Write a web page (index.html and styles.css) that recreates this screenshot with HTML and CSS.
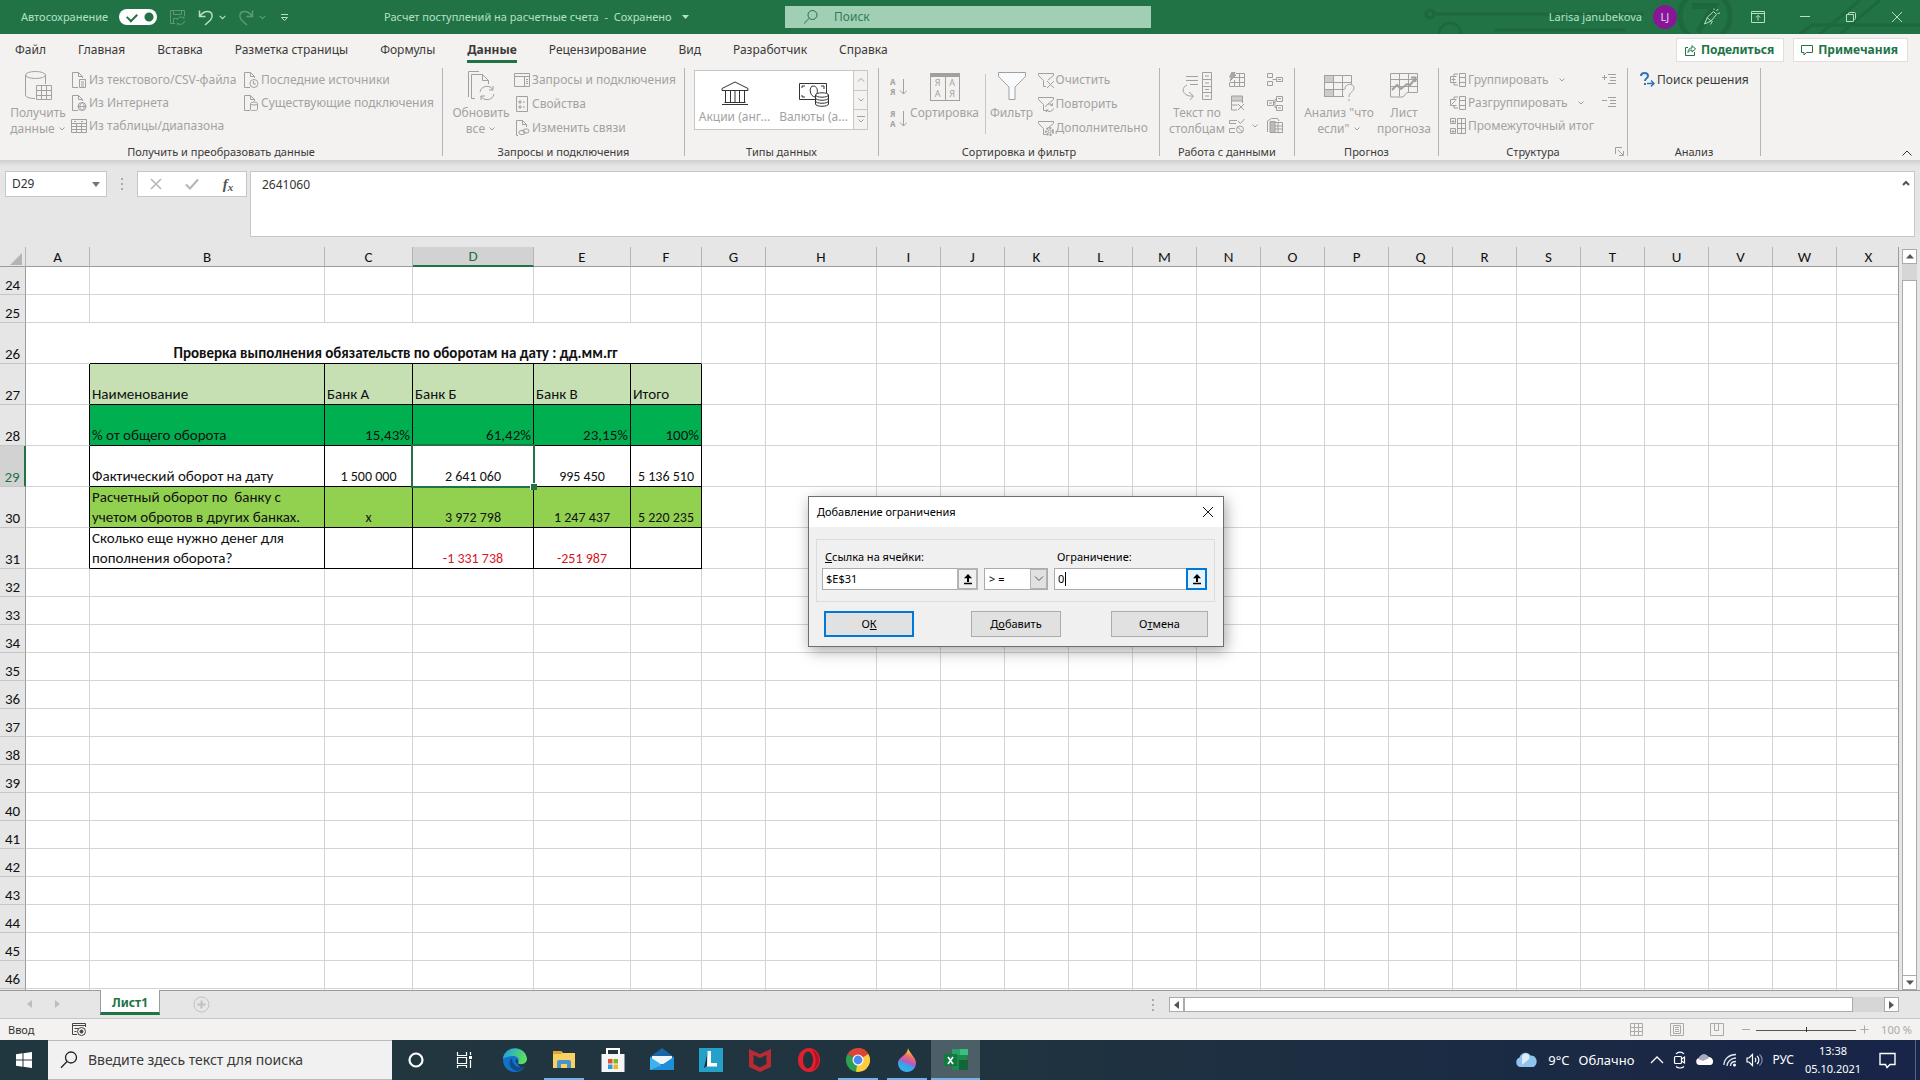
FILE: index.html
```html
<!DOCTYPE html>
<html lang="ru">
<head>
<meta charset="utf-8">
<title>Расчет поступлений на расчетные счета - Excel</title>
<link rel="stylesheet" href="styles.css">
</head>
<body>
<svg class="defs" width="0" height="0" aria-hidden="true">
  <symbol id="chev" viewBox="0 0 8 8"><path d="M1.5 2.5 4 5l2.500-2.500"/></symbol>
  <symbol id="chev-up" viewBox="0 0 8 8"><path d="M1 5.500 4 2.500l3 3"/></symbol>
  <symbol id="page" viewBox="0 0 16 16"><path d="M7 15.500H1.500V.5h6l4 4V6M7.500.5v4h4"/></symbol>
  <symbol id="funnel" viewBox="0 0 16 16"><path d="M.5 1.500h15v2L10 8M.5 1.500v2l5 5v6H8"/></symbol>
  <symbol id="pick" viewBox="0 0 12 12"><path d="M2 10.500h8" stroke="#000" stroke-width="1.500"/><path d="M6 1 2 5.200h3V9h2V5.200h3z" fill="#000" stroke="none"/></symbol>
</svg>

<header class="titlebar">
  <svg class="pattern" width="520" height="34" viewBox="0 0 520 34"><g fill="none" stroke="#1b6239" stroke-width="3"><circle cx="30" cy="14" r="4"/><path d="M34 14h210M95 30h130M400 34l12-9h108M420 34 460 0M440 34 480 0"/><circle cx="50" cy="34" r="11"/><circle cx="305" cy="16" r="25" stroke-width="5"/><path d="m292 6h22l-16 26" stroke-width="6"/></g></svg>
  <div class="title-left">
    <label class="autosave" for="autosave">Автосохранение</label>
    <input class="toggle" type="checkbox" id="autosave" checked>
    <button class="tb-btn dim" aria-label="Сохранить"><svg width="17" height="17" viewBox="0 0 17 17"><path d="M6 14.500H1.500v-13h14V7M4.500 1.500v4h8v-4M4.500 14V9.500H8M8 11a4 4 0 0 1 7-1.500V7.500M15.500 12a4 4 0 0 1-7 2V16"/></svg></button>
    <button class="tb-btn lit" aria-label="Отменить"><svg width="16" height="17" viewBox="0 0 16 17"><path d="M1.500 1.500v6h6M1.500 7.500C4 4 7 2.500 9.500 2.500c5 0 6 5 3 8.500L7 16" stroke-width="1.500"/></svg></button>
    <button class="tb-btn lit chev-btn" aria-label="Список отмены"><svg width="9" height="9" viewBox="0 0 8 8"><use href="#chev"/></svg></button>
    <button class="tb-btn dim" aria-label="Вернуть"><svg width="16" height="17" viewBox="0 0 16 17"><path d="M14.500 1.500v6h-6M14.500 7.500C12 4 9 2.500 6.500 2.500c-5 0-6 5-3 8.500L9 16" stroke-width="1.500"/></svg></button>
    <button class="tb-btn dim chev-btn" aria-label="Список возврата"><svg width="9" height="9" viewBox="0 0 8 8"><use href="#chev"/></svg></button>
    <button class="tb-btn lit custom" aria-label="Настройка панели"><svg width="9" height="9" viewBox="0 0 9 9"><path d="M1 1.500h7M1.500 4.500h6l-3 3z"/></svg></button>
  </div>
  <div class="doc-title"><span>Расчет поступлений на расчетные счета&nbsp; - &nbsp;Сохранено</span><svg width="7" height="4" viewBox="0 0 7 4"><path class="solid" d="M0 0h7L3.500 4z"/></svg></div>
  <div class="search">
    <svg width="16" height="16" viewBox="0 0 16 16"><circle cx="9.500" cy="6" r="4.500"/><path d="M6.300 9.300 1 14.500"/></svg>
    <input type="search" placeholder="Поиск" aria-label="Поиск">
  </div>
  <div class="title-right">
    <span class="user">Larisa janubekova</span>
    <span class="avatar">LJ</span>
    <button class="tb-btn pen" aria-label="Возможности"><svg width="18" height="18" viewBox="0 0 18 18"><path d="m1.500 16 3-7 6-5.500 3 3-5.500 6.500-6.500 3zM4 9.500l4 3.500M9.500 13l-2 3.500M11 2V.5M13.500 3 15 1M14.500 5.500l2.500-.5"/></svg></button>
    <button class="tb-btn" aria-label="Параметры ленты"><svg width="14" height="12" viewBox="0 0 14 12"><path d="M.5.5h13v11H.5zM.5 2.500h13M7 9.500V4.500M4.800 6.500 7 4.300l2.200 2.200"/></svg></button>
    <button class="tb-btn" aria-label="Свернуть"><svg width="12" height="12" viewBox="0 0 12 12"><path d="M1 5.500h10"/></svg></button>
    <button class="tb-btn" aria-label="Развернуть"><svg width="12" height="12" viewBox="0 0 12 12"><path d="M1.500 3.500h7v7h-7zM3.500 3.500V2a1 1 0 0 1 1-.5h5a1 1 0 0 1 1 1v5a1 1 0 0 1-1 1h-1"/></svg></button>
    <button class="tb-btn" aria-label="Закрыть"><svg width="12" height="12" viewBox="0 0 12 12"><path d="m1 1 10 10M11 1 1 11"/></svg></button>
  </div>
</header>

<nav class="tabs">
  <a href="#">Файл</a><a href="#">Главная</a><a href="#">Вставка</a><a href="#">Разметка страницы</a><a href="#">Формулы</a><a href="#" class="active">Данные</a><a href="#">Рецензирование</a><a href="#">Вид</a><a href="#">Разработчик</a><a href="#">Справка</a>
  <div class="tab-actions">
    <button><svg width="12" height="12" viewBox="0 0 12 12"><path d="M4 3.500H1.500v8h9V8M4 8.500c0-3 1.500-4.500 4-4.500V1.500L11.500 5 8 8V6C6 6 5 7 4 8.500z"/></svg>Поделиться</button>
    <button><svg width="12" height="12" viewBox="0 0 12 12"><path d="M.5 1.500h11v7h-6L3 11V8.500H.5z"/></svg>Примечания</button>
  </div>
</nav>

<section class="ribbon">
  <div class="group g-get">
    <div class="tools">
      <button class="big"><svg width="28" height="32" viewBox="0 0 28 32"><path d="M11 28.500C5 28.500 1.500 27 1.500 25V5M21.500 5v9"/><ellipse cx="11.500" cy="5" rx="10" ry="3.500"/><path d="M12.500 15.500h15v14h-15zM12.500 20.500h15M12.500 25.500h15M17.500 15.500v14M22.500 15.500v14"/></svg><span>Получить<br>данные <svg class="c" width="8" height="8"><use href="#chev"/></svg></span></button>
      <div class="col c1">
        <button class="small"><svg width="16" height="16" viewBox="0 0 16 16"><use href="#page"/><path d="M8.500 7.500h6v8h-6zM10 10h3M10 12h3M10 14h3"/></svg>Из текстового/CSV-файла</button>
        <button class="small"><svg width="16" height="16" viewBox="0 0 16 16"><use href="#page"/><circle cx="11" cy="11.500" r="4"/><path d="M7 11.500h8M11 7.500c-3 3-3 5 0 8c3-3 3-5 0-8"/></svg>Из Интернета</button>
        <button class="small"><svg width="16" height="16" viewBox="0 0 16 16"><path d="M.5 1.500h15v13H.5zM.5 5.500h15M.5 8.500h15M.5 11.500h15M5.500 5.500v9M10.500 5.500v9M3 3.500h2M10 3.500h2"/></svg>Из таблицы/диапазона</button>
      </div>
      <div class="col">
        <button class="small"><svg width="16" height="16" viewBox="0 0 16 16"><use href="#page"/><circle cx="11" cy="11.500" r="4"/><path d="M10.500 9v3H13"/></svg>Последние источники</button>
        <button class="small"><svg width="16" height="16" viewBox="0 0 16 16"><use href="#page"/><path d="M7.500 8.500v6c0 1.500 7 1.500 7 0v-6"/><ellipse cx="11" cy="8.500" rx="3.500" ry="1.500"/></svg>Существующие подключения</button>
      </div>
    </div>
    <h2>Получить и преобразовать данные</h2>
  </div>

  <div class="group g-query">
    <div class="tools">
      <button class="big"><svg width="28" height="32" viewBox="0 0 28 32"><path d="M1.500 27V1.500H12M8 28.500H4.500v-24h11l6 6V14M15.500 4.500v6h6"/><path d="M13 22a7 7 0 0 1 13-2v-4M26 20h-4M27 24a7 7 0 0 1-13 2v4M14 26h4"/></svg><span>Обновить<br>все <svg class="c" width="8" height="8"><use href="#chev"/></svg></span></button>
      <div class="col tall">
        <button class="small"><svg width="16" height="16" viewBox="0 0 16 16"><path d="M.5 1.500h15v13H.5zM.5 4.500h15M10.500 4.500v10M12 7.500h2M12 9.500h2M12 11.500h2"/></svg>Запросы и подключения</button>
        <button class="small"><svg width="16" height="16" viewBox="0 0 16 16"><path d="M2.500.5h11v15h-11zM5 5h2v2H5zM5 10h2v2H5zM9 6h2M9 11h2"/></svg>Свойства</button>
        <button class="small"><svg width="16" height="16" viewBox="0 0 16 16"><path d="M4 15.500H2.500V.5h6l4 4V7M8.500.5v4h4"/><rect x="5" y="10.500" width="6" height="4" rx="2"/><rect x="9" y="9" width="6" height="4" rx="2"/></svg>Изменить связи</button>
      </div>
    </div>
    <h2>Запросы и подключения</h2>
  </div>

  <div class="group g-types">
    <div class="tools">
      <div class="gallery">
        <button><svg class="dark" width="28" height="26" viewBox="0 0 28 26"><path d="M1 7.500 14 1l13 6.500v2H1zM1 23.500h26M3.500 21.500h21M4.500 10v11M9.500 10v11M14 10v11M18.500 10v11M23.500 10v11"/></svg><span>Акции (анг...</span></button>
        <button><svg class="dark" width="30" height="26" viewBox="0 0 30 26"><path d="M16 18.500H.5v-16h27V12M3 7V5h3M3 14v2h3M22 5h3v3"/><path d="M16 16c-6-1-6-11-2-11s5 4 4 8"/><path d="M16.500 14v9c0 3 13 3 13 0v-9M16.500 17c0 3 13 3 13 0M16.500 20c0 3 13 3 13 0"/><ellipse cx="23" cy="14" rx="6.500" ry="2.200"/></svg><span>Валюты (а...</span></button>
        <div class="gallery-nav"><button aria-label="Вверх"><svg width="8" height="8"><use href="#chev-up"/></svg></button><button aria-label="Вниз"><svg width="8" height="8"><use href="#chev"/></svg></button><button aria-label="Еще"><svg width="8" height="9" viewBox="0 0 8 9"><path d="M0 1.500h8M1.500 4.500 4 7l2.500-2.500"/></svg></button></div>
      </div>
    </div>
    <h2>Типы данных</h2>
  </div>

  <div class="group g-sort">
    <div class="tools">
      <div class="col sorts">
        <button class="icon-only"><span class="az">А<br>Я</span><svg width="8" height="18" viewBox="0 0 8 18"><path d="M4.500 1v15M1 12.500 4.500 16 8 12.500"/></svg></button>
        <button class="icon-only"><span class="az">Я<br>А</span><svg width="8" height="18" viewBox="0 0 8 18"><path d="M4.500 1v15M1 12.500 4.500 16 8 12.500"/></svg></button>
      </div>
      <button class="big"><span class="sort-box"><span>Я<br>А</span><span>А<br>Я</span></span><span>Сортировка</span></button>
      <i class="rule"></i>
      <button class="big filter"><svg width="28" height="32" viewBox="0 0 28 32"><path d="M.5 2.500h27v4L17 17v12.500h-6V17L.5 6.500z" fill="#f8fafb"/></svg><span>Фильтр</span></button>
      <div class="col tall">
        <button class="small"><svg width="16" height="16" viewBox="0 0 16 16"><use href="#funnel"/><path d="m9 9 7 7M16 9l-7 7"/></svg>Очистить</button>
        <button class="small"><svg width="16" height="16" viewBox="0 0 16 16"><use href="#funnel"/><path d="M7.500 11a4 4 0 0 1 7-1.500V7M14.500 9.500h-2M15.500 12.500a4 4 0 0 1-7 1.500v2M8.500 14h2"/></svg>Повторить</button>
        <button class="small"><svg width="16" height="16" viewBox="0 0 16 16"><use href="#funnel"/><circle cx="11.500" cy="11.500" r="1.500"/><circle cx="11.500" cy="11.500" r="3.500" stroke-dasharray="2 1.200" stroke-width="2"/></svg>Дополнительно</button>
      </div>
    </div>
    <h2>Сортировка и фильтр</h2>
  </div>

  <div class="group g-data">
    <div class="tools">
      <button class="big"><svg width="32" height="32" viewBox="0 0 32 32"><path d="M5 6.500h12M5 10.500h12M9 14.500h8M6 15c-7 3-4 12 6 11M8 22l4.500 4L9 30M21.500 2.500h9v27h-9zM21.500 9.500h9M21.500 16.500h9M21.500 22.500h9M24 6h4M24 13h4M24 19.500h4M24 26h4"/></svg><span>Текст по<br>столбцам</span></button>
      <div class="col icons">
        <button class="icon-only" aria-label="Мгновенное заполнение"><svg width="16" height="16" viewBox="0 0 16 16"><path d="M7 1.500h8.500v13H.5V11M10.500 1.500v13M5.500 8v6.500M5 5.500h10.500M.5 10.500h15"/><path d="M3 0h3L5 3h2L1 9l1.500-4H.5z" fill="#aaa"/></svg></button>
        <button class="icon-only" aria-label="Удалить дубликаты"><svg width="16" height="16" viewBox="0 0 16 16"><path d="M2.500 1h11v5h-11z" fill="#ccc"/><path d="M13.500 8V1M2.500 6v4h6M2.500 10v5H8M9 9l6 6M15 9l-6 6"/></svg></button>
        <button class="icon-only wide" aria-label="Проверка данных"><svg width="16" height="16" viewBox="0 0 16 16"><path d="M8 2.500H.5v3H7M9 3l2.500 2.500L15.500 1M6 10.500H.5v4H6"/><circle cx="11" cy="11.500" r="3.500"/><path d="m8.500 9 5 5"/></svg><svg width="8" height="8"><use href="#chev"/></svg></button>
      </div>
      <div class="col icons">
        <button class="icon-only" aria-label="Консолидация"><svg width="16" height="16" viewBox="0 0 16 16"><path d="M.5 1.500h5v4h-5zM.5 9.500h5v4h-5zM9.500 5.500h6v4h-6zM5.500 7.500h4M11 7.500h3"/></svg></button>
        <button class="icon-only" aria-label="Отношения"><svg width="16" height="16" viewBox="0 0 16 16"><path d="M.5 5.500h6v5h-6zM9.500 1.500h6v5h-6zM9.500 10.500h6v5h-6zM6.500 7.500h1.500v-3h1.500M8 7.500v5h1.500M2 8h3M11 3.500h3M11 13h3"/></svg></button>
        <button class="icon-only" aria-label="Модель данных"><svg width="16" height="16" viewBox="0 0 16 16"><path d="M.5 14V3l4-2.500h6L12 3M7 4.500h8.500v10H7M7 8h8M7 11h8M11 4.500v10"/><path d="M3 3.500h5v11H3z" fill="#bbb"/></svg></button>
      </div>
    </div>
    <h2>Работа с данными</h2>
  </div>

  <div class="group g-forecast">
    <div class="tools">
      <button class="big"><svg width="32" height="32" viewBox="0 0 32 32"><path d="M1.500 5.500h9v7h-9zM1.500 19.500h9v7h-9z" fill="#ccc"/><path d="M21 26.500H1.500v-21h27V14M1.500 12.500h27M1.500 19.500h20M10.500 5.500v21M19.500 5.500v21M22 19c0-6 9-6 9-1 0 4-5 4-5 9M26 29v2"/></svg><span>Анализ "что<br>если" <svg class="c" width="8" height="8"><use href="#chev"/></svg></span></button>
      <button class="big forecast-sheet"><svg width="28" height="32" viewBox="0 0 28 32"><path d="M.5 3.500h27v19H17l-4 4.500H.5zM.5 9.500h27M.5 16.500h27M9.500 3.500v23M18.500 3.500v19"/><path d="m2 20 5-5 4 4 6-5 3 1 5-6M21 7.500h4.500V12" stroke-width="2"/></svg><span>Лист<br>прогноза</span></button>
    </div>
    <h2>Прогноз</h2>
  </div>

  <div class="group g-outline">
    <div class="tools">
      <div class="col">
        <button class="small"><svg width="16" height="16" viewBox="0 0 16 16"><path d="M6.500 4.500h-6v6h6M3.500 5.500v4M1.500 7.500h4M8 2H4v2M8 13H4v-2M9.500 1.500h6v13h-6zM9.500 5.500h6M9.500 10.500h6"/></svg>Группировать<svg class="far" width="8" height="8"><use href="#chev"/></svg></button>
        <button class="small"><svg width="16" height="16" viewBox="0 0 16 16"><path d="M6.500 4.500h-6v6h6M1.500 9.500l4-4M8 2H4v2M8 13H4v-2M9.500 1.500h6v13h-6zM9.500 5.500h6M9.500 10.500h6"/></svg>Разгруппировать<svg class="far" width="8" height="8"><use href="#chev"/></svg></button>
        <button class="small"><svg width="16" height="16" viewBox="0 0 16 16"><path d="M.5.5h5v5h-5zM.5 10.500h5v5h-5zM3 2v3M1.500 3.500h3M3 12v3M1.500 13.500h3M7.500.5h8v15h-8zM7.500 5.500h8M7.500 10.500h8M11.500.5v15"/></svg>Промежуточный итог</button>
      </div>
      <div class="col end">
        <button class="icon-only" aria-label="Показать детали"><svg width="16" height="16" viewBox="0 0 16 16"><path d="M1 5.500h5M3.500 3v5M7 2.500h8M9 5.500h6M9 8.500h6M7 11.500h8"/></svg></button>
        <button class="icon-only" aria-label="Скрыть детали"><svg width="16" height="16" viewBox="0 0 16 16"><path d="M1 5.500h5M7 2.500h8M9 5.500h6M9 8.500h6M7 11.500h8"/></svg></button>
      </div>
    </div>
    <h2>Структура</h2>
    <button class="launcher" aria-label="Параметры структуры"><svg width="9" height="9" viewBox="0 0 9 9"><path d="M.5 7V.5H7M3 3l5 5M8.500 4v4.500H4"/></svg></button>
  </div>

  <div class="group g-solver">
    <div class="tools">
      <button class="small live"><svg width="15" height="16" viewBox="0 0 15 16"><g stroke="#2e75b6" stroke-width="2"><path d="M1 4c0-4 7-4 7 0 0 2.500-3 2-3 5M5 11v2"/><path d="M7 11.500h7M11 8.500l3 3-3 3" stroke-width="1.500"/></g></svg>Поиск решения</button>
    </div>
    <h2>Анализ</h2>
  </div>
  <button class="collapse" aria-label="Свернуть ленту"><svg width="10" height="6" viewBox="0 0 10 6"><path d="M.5 5.500 5 1l4.500 4.500"/></svg></button>
</section>

<section class="formula">
  <div class="namebox"><input type="text" value="D29" aria-label="Имя"><svg width="8" height="5" viewBox="0 0 8 5"><path d="M0 0h8L4 5z" fill="#777"/></svg></div>
  <i class="dots"></i>
  <div class="fx">
    <button aria-label="Отмена"><svg width="12" height="12" viewBox="0 0 12 12"><path d="m1 1 10 10M11 1 1 11" stroke="#b5b5b5" stroke-width="1.500" fill="none"/></svg></button>
    <button aria-label="Ввод"><svg width="14" height="12" viewBox="0 0 14 12"><path d="m1 6.500 4 4L13 1.500" stroke="#b5b5b5" stroke-width="2" fill="none"/></svg></button>
    <button class="fn" aria-label="Вставить функцию">f<sub>x</sub></button>
  </div>
  <div class="formula-box"><textarea aria-label="Строка формул">2641060</textarea><svg width="8" height="8" viewBox="0 0 8 8"><path d="M1 6 4 3l3 3" stroke="#555" stroke-width="2" fill="none"/></svg></div>
</section>

<main class="grid-area">
  <div class="sheet">
    <table>
      <colgroup><col class="w26"><col class="w64"><col class="w235"><col class="w88"><col class="w121"><col class="w97"><col class="w71"><col class="w64"><col class="w111"><col class="w64" span="16"></colgroup>
      <thead><tr><th class="corner"><svg width="12" height="12" viewBox="0 0 12 12"><path d="M12 0v12H0z" fill="#b4b4b4"/></svg></th><th>A</th><th>B</th><th>C</th><th class="sel">D</th><th>E</th><th>F</th><th>G</th><th>H</th><th>I</th><th>J</th><th>K</th><th>L</th><th>M</th><th>N</th><th>O</th><th>P</th><th>Q</th><th>R</th><th>S</th><th>T</th><th>U</th><th>V</th><th>W</th><th>X</th></tr></thead>
      <tbody>
        <tr><th>24</th></tr>
        <tr><th>25</th></tr>
        <tr class="t head"><th>26</th><td></td><td colspan="5">Проверка выполнения обязательств по оборотам на дату : дд.мм.гг</td></tr>
        <tr class="t light"><th>27</th><td class="edge"></td><td>Наименование</td><td>Банк А</td><td>Банк Б</td><td>Банк В</td><td>Итого</td></tr>
        <tr class="t green pct"><th>28</th><td class="edge"></td><td>% от общего оборота</td><td>15,43%</td><td>61,42%</td><td>23,15%</td><td>100%</td></tr>
        <tr class="t num"><th class="sel">29</th><td class="edge"></td><td>Фактический оборот на дату</td><td>1 500 000</td><td class="active">2 641 060</td><td>995 450</td><td>5 136 510</td></tr>
        <tr class="t lime num"><th>30</th><td class="edge"></td><td>Расчетный оборот по&nbsp; банку с<br>учетом обротов в других банках.</td><td>х</td><td>3 972 798</td><td>1 247 437</td><td>5 220 235</td></tr>
        <tr class="t num"><th>31</th><td class="edge"></td><td>Сколько еще нужно денег для<br>пополнения оборота?</td><td></td><td class="neg">-1 331 738</td><td class="neg">-251 987</td><td></td></tr>
      </tbody>
    </table>
  </div>
  <div class="vscroll">
    <button aria-label="Прокрутить вверх"><svg width="8" height="5" viewBox="0 0 8 5"><path d="M4 0 8 4.500H0z" fill="#555"/></svg></button>
    <i class="thumb"></i>
    <button aria-label="Прокрутить вниз"><svg width="8" height="5" viewBox="0 0 8 5"><path d="M4 5 8 .5H0z" fill="#555"/></svg></button>
  </div>
</main>

<section class="sheetbar">
  <button class="nav" aria-label="Предыдущий лист"><svg width="5" height="8" viewBox="0 0 5 8"><path d="M5 0v8L0 4z" fill="#bdbdbd"/></svg></button>
  <button class="nav" aria-label="Следующий лист"><svg width="5" height="8" viewBox="0 0 5 8"><path d="M0 0v8l5-4z" fill="#bdbdbd"/></svg></button>
  <button class="sheet-tab">Лист1</button>
  <button class="add" aria-label="Новый лист"><svg width="17" height="17" viewBox="0 0 17 17"><circle cx="8.500" cy="8.500" r="7.500" fill="none" stroke="#c0c0c0"/><path d="M4.500 8.500h8M8.500 4.500v8" stroke="#c0c0c0" stroke-width="2"/></svg></button>
  <i class="dots"></i>
  <div class="hscroll">
    <button aria-label="Прокрутить влево"><svg width="5" height="8" viewBox="0 0 5 8"><path d="M5 0v8L0 4z" fill="#555"/></svg></button>
    <i class="thumb"></i>
    <button aria-label="Прокрутить вправо"><svg width="5" height="8" viewBox="0 0 5 8"><path d="M0 0v8l5-4z" fill="#555"/></svg></button>
  </div>
</section>

<footer class="status">
  <span class="mode">Ввод</span>
  <button aria-label="Запись макроса"><svg class="dk" width="15" height="13" viewBox="0 0 15 13"><path d="M5 11.500H.5V.5h13V4M.5 2.500h13M2.500 5.500h4M2.500 8.500h2"/><circle cx="9.500" cy="8.500" r="4"/><circle cx="9.500" cy="8.500" r="1.500" fill="#444"/></svg></button>
  <div class="views">
    <button aria-label="Обычный"><svg width="14" height="13" viewBox="0 0 14 13"><path d="M.5.5h12v12H.5zM.5 4.500h12M.5 8.500h12M4.500.5v12M8.500.5v12"/></svg></button>
    <button aria-label="Разметка страницы"><svg width="14" height="13" viewBox="0 0 14 13"><path d="M.5.5h13v12H.5zM3.500 2.500h7v8h-7zM5 4.500h4M5 6.500h4M5 8.500h4"/></svg></button>
    <button aria-label="Страничный режим"><svg width="14" height="13" viewBox="0 0 14 13"><path d="M.5.5h13v12H.5zM4.500.5v7h4v-7M8.500 7.500v-7"/></svg></button>
  </div>
  <button aria-label="Уменьшить"><svg width="9" height="9" viewBox="0 0 9 9"><path d="M0 4.500h8"/></svg></button>
  <input type="range" min="0" max="100" value="50" aria-label="Масштаб">
  <button aria-label="Увеличить"><svg width="9" height="9" viewBox="0 0 9 9"><path d="M.5 4.500h8M4.500.5v8"/></svg></button>
  <span class="percent">100 %</span>
</footer>

<footer class="taskbar">
  <button class="start" aria-label="Пуск"><svg width="16" height="16" viewBox="0 0 16 16"><path d="M0 2.200 6.500 1.300v6.200H0zM7.500 1.200 16 0v7.500H7.500zM0 8.500h6.500v6.200L0 13.800zM7.500 8.500H16V16l-8.500-1.200z" fill="#fff"/></svg></button>
  <div class="tsearch"><svg width="18" height="18" viewBox="0 0 18 18"><circle cx="11" cy="6.500" r="5.500" fill="none" stroke="#222" stroke-width="1.300"/><path d="M7 10.500 1 16.800" stroke="#222" stroke-width="1.300"/></svg><input type="text" placeholder="Введите здесь текст для поиска" aria-label="Поиск в системе"></div>
  <button class="app sys" aria-label="Кортана"><svg width="18" height="18" viewBox="0 0 18 18"><circle cx="9" cy="9" r="6.500" fill="none" stroke="#fff" stroke-width="2.200"/></svg></button>
  <button class="app sys" aria-label="Представление задач"><svg width="17" height="16" viewBox="0 0 17 16"><path d="M1.500 0v3.500h9V0M1.500 6.500v-1h9v6h-9zM1.500 16v-2.500h9V16M14.500 0v3M14.500 8v8" fill="none" stroke="#fff" stroke-width="1.200"/><path d="M13 4h3v3h-3z" fill="#fff"/></svg></button>
  <button class="app" aria-label="Edge"><svg width="24" height="24" viewBox="0 0 24 24"><defs><linearGradient id="e1" x1="0" x2="1" y1=".2" y2=".4"><stop offset="0" stop-color="#1f9fe0"/><stop offset="1" stop-color="#5fe05a"/></linearGradient></defs><circle cx="12" cy="12" r="12" fill="#1272c8"/><path d="M0 11C1-2 22-4 24 11c.5 5-7 7-9 4 2-3 0-7-5-7-4 0-8 1-10 3z" fill="url(#e1)"/><path d="M9 10c-5 4-2 12 5 13 4 0 7-3 8-5-6 3-13 0-13-8z" fill="#0d4a92"/><path d="M14 15c-2-1-1-3-1-4 2 1 3 5 1 4z" fill="#21343c"/><path d="M14.500 15c3 2.500 8 1.500 9.500-3v6l-2 1c-3 1.500-7-1-7.500-4z" fill="#22373e"/></svg></button>
  <button class="app open" aria-label="Проводник"><svg width="22" height="20" viewBox="0 0 22 20"><path d="M0 1h8l2 2h12v15H0z" fill="#f8d063"/><path d="M0 1h8l1 3H0z" fill="#dfa52e"/><path d="M4 18v-6q0-2 2-2h10q2 0 2 2v6h-4v-4H8v4z" fill="#4c93cc"/></svg></button>
  <button class="app" aria-label="Магазин"><svg width="24" height="24" viewBox="0 0 24 24"><path d="M6 7V1h12v6" fill="none" stroke="#fff" stroke-width="2"/><path d="M.5 6h23v18H.5z" fill="#f5f5f5"/><path d="M7 11h4.500v4.500H7z" fill="#e5532d"/><path d="M12.500 11H17v4.500h-4.500z" fill="#7eb52c"/><path d="M7 16.500h4.500V21H7z" fill="#2a9de0"/><path d="M12.500 16.500H17V21h-4.500z" fill="#f3b51f"/></svg></button>
  <button class="app" aria-label="Почта"><svg width="24" height="24" viewBox="0 0 24 24"><path d="M0 9 12 0l12 9v13H0z" fill="#1766a8"/><path d="M2 8h20v8H2z" fill="#eef6fc"/><path d="m0 9 12 8 12-8v13H0z" fill="#3eb2ee"/><path d="m24 9-12 8-12 5h24z" fill="#1f8edb"/></svg></button>
  <button class="app" aria-label="Lingvo"><svg width="24" height="24" viewBox="0 0 24 24"><path d="M0 0h24v24H0z" fill="#25a0c8"/><path d="m9 3-4 17 3-2z" fill="#0e2f42"/><path d="M8.500 3H12v12h6v3.500H8z" fill="#fff"/></svg></button>
  <button class="app" aria-label="McAfee"><svg width="22" height="24" viewBox="0 0 22 24"><path d="m0 1 11 5 11-5v18l-11 5-11-5zM4.500 7v9l6.500 3.500 6.500-3.500V7L11 10z" fill="#bb2a34" fill-rule="evenodd"/></svg></button>
  <button class="app" aria-label="Opera"><svg width="24" height="24" viewBox="0 0 24 24"><ellipse cx="12" cy="12" rx="11" ry="12" fill="#e11f2f"/><ellipse cx="11" cy="12" rx="5" ry="8.500" fill="#21343e"/><path d="M15 2c8 2 10 16 0 20 6-5 4-16 0-20z" fill="#b3121e"/></svg></button>
  <button class="app open" aria-label="Chrome"><svg width="24" height="24" viewBox="0 0 24 24"><path d="M12 12 1.600 6A12 12 0 0 1 22.400 6z" fill="#dc4437"/><path d="M12 12V0a12 12 0 0 1 10.400 6z" fill="#dc4437"/><path d="M12 12 22.400 6A12 12 0 0 1 12 24z" fill="#fccd3f"/><path d="M12 12v12A12 12 0 0 1 1.600 6z" fill="#2da04f"/><path d="m12 12 5 3-5 9-2-.500z" fill="#fccd3f"/><circle cx="12" cy="12" r="5.500" fill="#fff"/><circle cx="12" cy="12" r="4.400" fill="#4a8af4"/></svg></button>
  <button class="app open" aria-label="Paint 3D"><svg width="20" height="24" viewBox="0 0 20 24"><defs><linearGradient id="d1" x1=".7" x2=".4" y1="0" y2="1"><stop offset=".1" stop-color="#ffd23c"/><stop offset=".35" stop-color="#f06a6a"/><stop offset=".6" stop-color="#b558c4"/><stop offset=".7" stop-color="#3f9fe8"/><stop offset="1" stop-color="#35b4ee"/></linearGradient></defs><path d="M11 0c1 5 8 9 8 15 0 5-4 9-9 9s-9-4-9-9C1 9 11 7 11 0z" fill="url(#d1)"/></svg></button>
  <button class="app open current" aria-label="Excel"><svg width="24" height="22" viewBox="0 0 24 22"><path d="M8 0h15v21H8z" fill="#1d8a4c"/><path d="M15 0h9v6h-9z" fill="#3ac17f"/><path d="M8 0h8v6H8z" fill="#27a465"/><path d="M15 11h9v10h-9z" fill="#14643a"/><path d="M0 5h13v12H0z" fill="#117a40"/><path d="m4 8 5 7M9 8l-5 7" stroke="#fff" stroke-width="1.600"/></svg></button>
  <div class="tray">
    <button class="weather"><svg width="24" height="18" viewBox="0 0 24 18"><path d="M5 16a5 5 0 0 1-.5-9.500C6 1 13 0 15.500 4.500 22 4 24 13 18.500 16z" fill="#8fc3ec"/><path d="M7 5c3-5 9-2 7 3L7 14z" fill="#dcecfa"/></svg><span>9°C</span><span>Облачно</span></button>
    <button aria-label="Скрытые значки"><svg width="14" height="8" viewBox="0 0 14 8"><path d="m1 7 6-6 6 6" fill="none" stroke="#fff" stroke-width="1.300"/></svg></button>
    <button aria-label="Камера"><svg width="14" height="18" viewBox="0 0 14 18"><g fill="none" stroke="#fff" stroke-width="1.200"><rect x="1.500" y="5.500" width="7" height="7" rx="1"/><path d="m8.500 8 3-2v6l-3-2M3 3c2-2.500 6-2.500 8 0M3 15.500c2 2 6 2 8 0"/></g></svg></button>
    <button aria-label="Облако"><svg width="18" height="12" viewBox="0 0 18 12"><path d="M4 11a3.500 3.500 0 0 1-.5-7C5-.5 10-.5 12 3c5-.5 7 6 3 8z" fill="#fff"/><path d="M2 5C5-1 11-1 13 4L7 7z" fill="#aab"/></svg></button>
    <button aria-label="Сеть"><svg width="14" height="14" viewBox="0 0 14 14"><g fill="none" stroke="#dfe4ee" stroke-width="1.300"><path d="M1 12C1 6 6 1.500 13 1.500M4 13c0-4 4-8 9-8M7.500 13c0-2.500 2-4.500 5.500-4.500"/></g><circle cx="11.500" cy="12" r="1.500" fill="#fff"/></svg></button>
    <button aria-label="Громкость"><svg width="17" height="14" viewBox="0 0 17 14"><g fill="none" stroke="#fff" stroke-width="1.200"><path d="M1 5v4h2l3.500 3.500v-11L3 5zM9 5c1 1 1 3 0 4M11 3c2.500 2 2.500 6 0 8"/><path d="M13.500 1.500c3.500 3 3.500 8 0 11" stroke="#7e87a5"/></g></svg></button>
    <button class="lang">РУС</button>
    <button class="clock"><span>13:38</span><span>05.10.2021</span></button>
    <button class="note" aria-label="Уведомления"><svg width="17" height="17" viewBox="0 0 17 17"><path d="M1 1.500h15v11h-5L8 15.500 6.500 12.500H1z" fill="none" stroke="#fff" stroke-width="1.400"/></svg></button>
  </div>
</footer>

<div class="dialog" role="dialog" aria-labelledby="dlg-title">
  <div class="dlg-head"><span id="dlg-title">Добавление ограничения</span><button aria-label="Закрыть"><svg width="12" height="12" viewBox="0 0 12 12"><path d="m1 1 10 10M11 1 1 11" stroke="#111" fill="none"/></svg></button></div>
  <div class="dlg-body">
    <div class="frame">
      <div class="field f1"><label for="ref"><u>С</u>сылка на ячейки:</label><div class="pickbox"><input id="ref" type="text" value="$E$31"><button aria-label="Выбрать ячейки"><svg width="12" height="12"><use href="#pick"/></svg></button></div></div>
      <div class="field f2"><div class="selbox"><select aria-label="Оператор"><option>&gt; =</option></select><i><svg width="10" height="6" viewBox="0 0 10 6"><path d="m1 .5 4 4 4-4" stroke="#555" fill="none"/></svg></i></div></div>
      <div class="field f3"><label for="lim">Ограничение:</label><div class="pickbox hot"><input id="lim" type="text" value="0"><i class="caret"></i><button aria-label="Выбрать ограничение"><svg width="12" height="12"><use href="#pick"/></svg></button></div></div>
    </div>
    <div class="dlg-buttons"><button class="ok">О<u>К</u></button><button>Д<u>о</u>бавить</button><button class="cancel">О<u>т</u>мена</button></div>
  </div>
</div>
<script src="grid.js"></script>
</body>
</html>
```
FILE: grid.js
```js
const COLUMNS = 24;
const LAST_ROW = 46;
const body = document.querySelector('.sheet tbody');

// One unlabelled row follows the last numbered one and is clipped by the window edge.
for (let n = 32; n <= LAST_ROW + 1; n++) {
  const row = body.insertRow();
  const head = document.createElement('th');
  head.textContent = n > LAST_ROW ? '' : n;
  row.append(head);
}

for (const row of body.rows) {
  let used = -1;
  for (const cell of row.cells) used += cell.colSpan;
  for (; used < COLUMNS; used++) {
    row.insertCell().className = 'blank';
  }
}
```
FILE: styles.css
```css
* { box-sizing: border-box; }
body {
  margin: 0;
  height: 100vh;
  display: flex;
  flex-direction: column;
  overflow: hidden;
  background: #e6e6e6;
  color: #333;
  font: 12px/16px "Noto Sans", "Open Sans", sans-serif;
}
button, input, textarea, select { font: inherit; color: inherit; }
button { border: 0; padding: 0; background: none; display: flex; align-items: center; justify-content: center; }
svg { display: block; flex: none; }
.defs { position: absolute; }
i { font-style: normal; }

/* title bar */
.titlebar {
  position: relative;
  height: 34px;
  flex: none;
  display: grid;
  grid-template-columns: 384px 401px 366px 1fr;
  align-items: center;
  background: #217346;
  color: #b5e0c5;
}
.titlebar svg { fill: none; stroke: currentColor; }
.titlebar .solid { fill: currentColor; stroke: none; }
.pattern { position: absolute; right: 0; top: 0; opacity: .6; }
.title-left { display: flex; align-items: center; padding-left: 21px; }
.autosave { width: 98px; font-size: 11px; white-space: nowrap; }
.toggle {
  appearance: none;
  margin: 0 12px 0 0;
  width: 38px;
  height: 16px;
  border-radius: 8px;
  background: radial-gradient(circle at 30px 8px, #217346 4px, transparent 5px), #fff;
}
.toggle::after {
  content: "";
  display: block;
  margin: 4px 0 0 8px;
  width: 8px;
  height: 5px;
  border: solid #217346;
  border-width: 0 0 2px 2px;
  transform: rotate(-45deg);
}
.tb-btn { height: 20px; }
.dim { color: #5c9a76; }
.lit { color: #b5e0c5; margin-left: 12px; }
.lit + .chev-btn, .dim + .chev-btn { margin-left: 4px; }
.chev-btn + .dim { margin-left: 11px; }
.chev-btn + .custom { margin-left: 13px; }
.doc-title { display: flex; align-items: center; gap: 10px; white-space: nowrap; font-size: 11px; }
.search { display: flex; align-items: center; height: 22px; background: #a0cfb4; padding-left: 18px; color: #217346; gap: 15px; }
.search input { flex: 1; border: 0; background: none; padding: 0; outline: 0; }
.search input::placeholder { color: #2f7d54; opacity: 1; }
.title-right { position: relative; display: flex; align-items: center; justify-content: flex-end; padding-right: 17px; }
.user { font-size: 11px; }
.avatar { width: 24px; height: 24px; border-radius: 50%; background: #881798; color: #e9cdee; font-size: 11px; line-height: 24px; text-align: center; margin: 0 26px 0 11px; }
.title-right .tb-btn { margin-left: 34px; }
.title-right .pen { margin-left: 0; }
.title-right .pen + .tb-btn { margin-left: 30px; }

/* ribbon tabs */
.tabs { flex: none; height: 34px; display: flex; align-items: center; gap: 32px; padding: 0 12px 2px 15px; background: #f3f2f1; white-space: nowrap; }
.tabs a { color: #3b3a39; text-decoration: none; line-height: 20px; border-bottom: 3px solid transparent; margin-top: 2px; }
.tabs a.active { font-weight: bold; border-color: #217346; }
.tab-actions { margin-left: auto; display: flex; gap: 9px; }
.tab-actions button { height: 24px; padding: 0 9px 0 7px; gap: 5px; background: #fff; border: 1px solid #e1dfdd; color: #217346; font-weight: bold; }
.tab-actions svg { fill: none; stroke: currentColor; }

/* ribbon */
.ribbon { position: relative; flex: none; height: 92px; display: flex; background: #f3f2f1; color: #a3a2a1; }
.ribbon svg { fill: none; stroke: #a0a0a0; }
.group { position: relative; flex: none; display: flex; flex-direction: column; border-right: 1px solid #b4b4b4; height: 88px; white-space: nowrap; }
.tools { flex: 1; display: flex; align-items: flex-start; }
.group h2 { margin: 0; font-size: 11px; font-weight: normal; line-height: 20px; height: 14px; color: #3b3a39; text-align: center; }
.g-get { width: 443px; }
.g-query { width: 242px; }
.g-types { width: 194px; }
.g-sort { width: 281px; }
.g-data { width: 135px; }
.g-forecast { width: 144px; }
.g-outline { width: 189px; }
.g-solver { width: 133px; }
.big { flex-direction: column; justify-content: flex-start; width: 60px; margin: 2px 0 0 8px; line-height: 16px; text-align: center; }
.big > svg { margin-bottom: 3px; }
.big .c { display: inline-block; }
.col { display: flex; flex-direction: column; margin-left: 3px; }
.c1 { width: 169px; }
.small { height: 23px; justify-content: flex-start; gap: 2px; }
.tall .small { height: 24px; }
.live { color: #3b3a39; margin-left: 12px; }
.far { margin-left: 7px; }
.icon-only { height: 23px; justify-content: flex-start; }
.gallery { display: flex; margin: 2px 0 0 9px; width: 174px; height: 60px; border: 1px solid #c8c6c4; background: #fff; }
.gallery > button { width: 79px; flex-direction: column; justify-content: flex-end; gap: 2px; padding-bottom: 4px; }
.ribbon svg.dark { stroke: #333; }
.gallery-nav { flex: 1; display: flex; flex-direction: column; border-left: 1px solid #c8c6c4; background: #f3f2f1; }
.gallery-nav button { flex: 1; }
.gallery-nav button + button { border-top: 1px solid #c8c6c4; }
.sorts { margin: 9px 0 0 11px; gap: 12px; }
.sorts .icon-only { height: 20px; gap: 3px; }
.az { font-size: 8px; line-height: 10px; font-weight: bold; }
.g-sort .big { width: 70px; margin-left: 3px; }
.sort-box { display: grid; grid-template-columns: 14px 14px; margin: 3px 0 4px; height: 28px; border: 1px solid #a0a0a0; border-top-width: 4px; font-size: 9px; line-height: 11px; }
.sort-box span + span { border-left: 1px solid #a0a0a0; }
.rule { width: 1px; height: 60px; margin: 6px 0 0 5px; background: #c8c6c4; }
.g-sort .filter { width: 52px; margin-left: 0; }
.g-sort .tall { margin-left: 0; }
.icons { margin-left: 2px; }
.icons .wide { gap: 6px; }
.icons + .icons { margin-left: 8px; }
.g-data .big { margin-left: 7px; }
.g-forecast .big { width: 72px; }
.g-forecast .forecast-sheet { width: 54px; margin-left: 2px; }
.g-outline .col { margin-left: 11px; }
.g-outline .end { margin: 0 10px 0 auto; }
.launcher { position: absolute; right: 3px; bottom: 0; }
.collapse { margin: 82px 8px 0 auto; align-self: flex-start; }
.ribbon .collapse svg { stroke: #333; }

/* formula bar */
.formula { flex: none; height: 87px; display: flex; align-items: flex-start; padding: 11px 5px 10px; background: linear-gradient(#cfcfcf, #e6e6e6 6px); }
.namebox, .fx, .formula-box { display: flex; background: #fff; border: 1px solid #c6c6c6; }
.namebox { width: 102px; height: 26px; align-items: center; padding: 0 6px 0 0; }
.namebox input { flex: 1; min-width: 0; border: 0; padding: 0 6px; outline: 0; }
.dots { width: 2px; height: 12px; margin: 7px 14px 0; background: repeating-linear-gradient(#aaa 0 2px, transparent 2px 5px); }
.fx { width: 110px; height: 26px; justify-content: space-around; }
.fx button { width: 36px; }
.fn { font: italic bold 15px/20px "Liberation Serif", serif; color: #555; }
.fn sub { font-size: 11px; line-height: 12px; align-self: flex-end; margin-bottom: 3px; }
.formula-box { flex: 1; height: 66px; margin-left: 3px; padding-right: 4px; }
.formula-box textarea { flex: 1; border: 0; resize: none; outline: 0; padding: 5px 11px; background: none; }
.formula-box svg { margin-top: 7px; }

/* worksheet */
.grid-area { flex: 1; min-height: 0; display: flex; border-bottom: 1px solid #9b9b9b; }
.sheet { flex: 1; min-width: 0; overflow: hidden; border-right: 1px solid #9b9b9b; background: #fff; }
.sheet table { table-layout: fixed; width: 0; min-width: 100%; border-collapse: separate; border-spacing: 0; color: #111; font: 15px/20px "Carlito", "Calibri", "Noto Sans", sans-serif; }
.w26 { width: 26px; } .w64 { width: 64px; } .w235 { width: 235px; } .w88 { width: 88px; }
.w121 { width: 121px; } .w97 { width: 97px; } .w71 { width: 71px; } .w111 { width: 111px; }
.sheet th { font-weight: normal; background: #e6e6e6; padding: 0; }
.sheet thead th { height: 20px; line-height: 18px; border-right: 1px solid #b4b4b4; border-bottom: 1px solid #9b9b9b; }
.sheet thead .sel { background: #d2d2d2; color: #217346; border-bottom: 2px solid #217346; }
.corner svg { margin: 4px 0 0 10px; }
.sheet tbody th { height: 28px; line-height: 18px; vertical-align: bottom; border-right: 1px solid #9b9b9b; border-bottom: 1px solid #c6c6c6; }
.sheet tbody .sel { background: #d2d2d2; color: #217346; border-right: 2px solid #217346; }
.sheet td { padding: 0 2px; vertical-align: bottom; border-right: 1px solid #d4d4d4; border-bottom: 1px solid #d4d4d4; white-space: nowrap; }
.sheet .t th, .t td { height: 41px; }
.t td:not(.blank):not(:nth-child(2)) { border-color: #000; }
.t .edge { border-right-color: #000; }
.head td:nth-child(2) { border-right-color: transparent; }
.head td:nth-child(3) { text-align: center; font-weight: bold; border-right-color: #d4d4d4 !important; }
.light td:not(.blank):not(.edge) { background: #c6e0b4; }
.green td:not(.blank):not(.edge) { background: #00b050; }
.lime td:not(.blank):not(.edge) { background: #92d050; }
.pct td:nth-child(n+4) { text-align: right; }
.num td:nth-child(n+4) { text-align: center; font-size: 14px; line-height: 18px; }
.sheet .neg { color: #d8141c; }
.active { position: relative; }
.sheet .active::before { content: ""; position: absolute; inset: -2px; border: 2px solid #217346; }
.sheet .active::after { content: ""; position: absolute; right: -4px; bottom: -4px; width: 6px; height: 6px; background: #217346; border: solid #fff; border-width: 1px 0 0 1px; }
.vscroll { flex: none; width: 21px; display: flex; flex-direction: column; padding: 2px 3px 0; background: linear-gradient(#d6d6d6, #d6d6d6) 3px 2px / 15px 100% no-repeat, #e6e6e6; }
.vscroll button, .hscroll button { flex: none; width: 15px; height: 15px; background: #fff; border: 1px solid #ababab; }
.vscroll .thumb { flex: 1; margin-top: 16px; background: #fff; border: 1px solid #ababab; border-bottom: 0; }

/* sheet tabs */
.sheetbar { flex: none; height: 28px; display: flex; align-items: flex-start; background: #e6e6e6; border-bottom: 1px solid #c6c6c6; padding-right: 21px; }
.nav { width: 28px; height: 26px; }
.nav:first-child { margin-left: 15px; }
.sheet-tab { width: 60px; height: 25px; margin: -1px 0 0 29px; padding-top: 4px; background: #fff; border: 1px solid #9b9b9b; border-width: 0 1px 3px; border-bottom-color: #217346; color: #217346; font-weight: bold; }
.add { margin: 5px auto 0 33px; }
.sheetbar .dots { margin: 8px 15px 0 0; }
.hscroll { width: 730px; display: flex; margin-top: 6px; background: #d6d6d6; }
.hscroll .thumb { flex: 1; margin-right: 31px; background: #fff; border: 1px solid #ababab; }

/* status bar */
.status { flex: none; height: 21px; display: flex; align-items: center; background: #f3f2f1; padding: 0 8px; font-size: 11px; }
.status svg { fill: none; stroke: #aaa; }
.status svg.dk { stroke: #444; }
.mode { width: 64px; }
.views { margin-left: auto; display: flex; gap: 26px; margin-right: 18px; }
.status input { appearance: none; width: 100px; height: 12px; margin: 0 4px 0 5px; background: linear-gradient(#555, #555) 0 6px / 100% 1px no-repeat; }
.status input::-webkit-slider-thumb { appearance: none; width: 1px; height: 5px; background: #333; }
.percent { color: #aaa; width: 43px; text-align: right; }

/* taskbar */
.taskbar { flex: none; height: 40px; display: flex; background: linear-gradient(90deg, #21373f, #20343f 50%, #1b2a44 80%, #182448); color: #fff; }
.start { width: 48px; }
.tsearch { width: 344px; display: flex; align-items: center; gap: 10px; padding-left: 12px; background: #f1f1f1; border: 1px solid #b9b9b9; border-width: 1px 0; color: #333; font-size: 14px; }
.tsearch input { flex: 1; border: 0; background: none; padding: 0; outline: 0; }
.tsearch input::placeholder { color: #3a3a3a; opacity: 1; }
.app { width: 49px; border-bottom: 3px solid transparent; padding-top: 3px; background-clip: padding-box; }
.sys { width: 48px; }
.sys + .app:not(.sys) { margin-left: 2px; }
.open { background: linear-gradient(#76b1e8, #76b1e8) 50% 100% / 40px 2px no-repeat border-box; }
.current { background: linear-gradient(#76b1e8, #76b1e8) 0 100% / 100% 2px no-repeat border-box, #4d5f66; }
.tray { margin-left: auto; display: flex; align-items: center; gap: 9px; padding-right: 4px; }
.weather { gap: 9px; font-size: 13px; margin-right: 7px; }
.clock { flex-direction: column; width: 60px; font-size: 11px; line-height: 18px; }
.note { width: 44px; height: 40px; padding-right: 12px; border-right: 1px solid #59627c; }

/* dialog */
.dialog { position: absolute; left: 808px; top: 496px; width: 416px; border: 1px solid #6e6e6e; background: #f0f0f0; box-shadow: 2px 4px 14px rgba(0, 0, 0, .35); color: #000; font-size: 11px; }
.dlg-head { height: 30px; display: flex; align-items: center; justify-content: space-between; padding: 0 9px 0 8px; background: #fff; }
.dlg-body { padding: 12px 8px 9px 7px; }
.frame { display: flex; align-items: flex-end; gap: 6px; height: 63px; padding: 0 7px 11px 5px; border: 1px solid #dcdcdc; }
.field label { display: block; padding-left: 3px; margin-bottom: 3px; }
.f1 { flex: none; width: 156px; }
.f2 { flex: none; width: 64px; }
.f3 { flex: 1; min-width: 0; }
.pickbox { position: relative; display: flex; height: 22px; background: #fff; border: 1px solid #ababab; }
.pickbox input { flex: 1; min-width: 0; border: 0; padding: 0 3px; outline: 0; background: none; }
.pickbox button { width: 21px; border: 2px solid #b4b4b4; background: #f0f0f0; margin: -1px; height: 22px; }
.pickbox.hot button { border: 2px solid #0078d7; background: #e9f3fb; }
.caret { position: absolute; left: 10px; top: 3px; width: 1px; height: 14px; background: #000; }
.selbox { display: flex; position: relative; height: 22px; border: 1px solid #ababab; background: #fff; }
.selbox select { appearance: none; flex: 1; min-width: 0; border: 0; padding: 0 4px; background: none; outline: 0; }
.selbox i { position: absolute; right: 0; top: 0; width: 17px; height: 20px; display: grid; place-items: center; background: #e1e1e1; border: 1px solid #b4b4b4; pointer-events: none; }
.dlg-buttons { display: flex; padding: 9px 7px 0 8px; }
.dlg-buttons button { display: block; width: 90px; height: 26px; background: #e1e1e1; border: 1px solid #adadad; }
.dlg-buttons .ok { border: 2px solid #0078d7; margin-right: 57px; }
.dlg-buttons .cancel { width: 97px; margin-left: auto; }
```
